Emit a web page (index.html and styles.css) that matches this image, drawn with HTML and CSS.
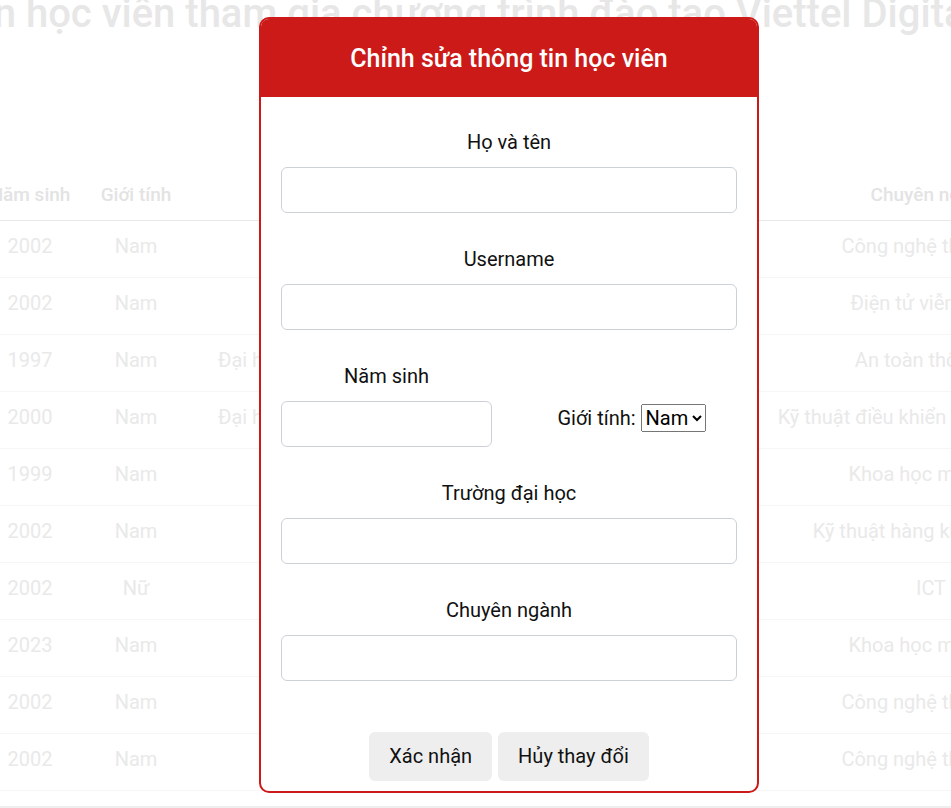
FILE: index.html
```html
<!DOCTYPE html>
<html lang="vi">

<head>
    <meta charset="UTF-8">
    <meta name="viewport" content="width=device-width, initial-scale=1.0">
    <title>Chỉnh sửa thông tin học viên</title>
    <link rel="stylesheet" href="styles.css">
</head>

<body>
    <div class="page">
        <h1 class="page-title">Thông tin học viên tham gia chương trình đào tạo Viettel Digital Talent</h1>
        <table class="student-table">
            <colgroup>
                <col class="col-year">
                <col class="col-gender">
                <col class="col-school">
                <col class="col-major">
            </colgroup>
            <thead>
                <tr>
                    <th>Năm sinh</th>
                    <th>Giới tính</th>
                    <th class="school">Trường đại học</th>
                    <th>Chuyên ngành</th>
                </tr>
            </thead>
            <tbody>
                <tr><td>2002</td><td>Nam</td><td class="school">Đại học Bách khoa</td><td>Công nghệ thông tin</td></tr>
                <tr><td>2002</td><td>Nam</td><td class="school">Học viện Kỹ thuật</td><td>Điện tử viễn thông</td></tr>
                <tr><td>1997</td><td>Nam</td><td class="school">Đại học Công nghệ Thông tin và Truyền thông Thái Nguyên</td><td>An toàn thông tin</td></tr>
                <tr><td>2000</td><td>Nam</td><td class="school">Đại học Công nghệ Thông tin và Truyền thông Thái Nguyên</td><td>Kỹ thuật điều khiển và tự động hóa</td></tr>
                <tr><td>1999</td><td>Nam</td><td class="school">Đại học FPT</td><td>Khoa học máy tính</td></tr>
                <tr><td>2002</td><td>Nam</td><td class="school">Học viện Hàng không</td><td>Kỹ thuật hàng không vũ trụ</td></tr>
                <tr><td>2002</td><td>Nữ</td><td class="school">Đại học Bách khoa</td><td>ICT</td></tr>
                <tr><td>2023</td><td>Nam</td><td class="school">Đại học Quốc gia</td><td>Khoa học máy tính</td></tr>
                <tr><td>2002</td><td>Nam</td><td class="school">Học viện Bưu chính</td><td>Công nghệ thông tin</td></tr>
                <tr><td>2002</td><td>Nam</td><td class="school">Đại học Bách khoa</td><td>Công nghệ thông tin</td></tr>
            </tbody>
        </table>
        <div class="scroll-bar"></div>
    </div>

    <div class="modal">
        <div class="modal-header">
            <h2>Chỉnh sửa thông tin học viên</h2>
        </div>
        <form class="modal-body">
            <div class="form-group">
                <label for="fullname">Họ và tên</label>
                <input type="text" id="fullname">
            </div>
            <div class="form-group">
                <label for="username">Username</label>
                <input type="text" id="username">
            </div>
            <div class="form-row">
                <div class="form-group">
                    <label for="birth-year">Năm sinh</label>
                    <input type="text" id="birth-year">
                </div>
                <div class="gender-group">
                    <label for="gender">Giới tính:</label>
                    <select id="gender">
                        <option>Nam</option>
                        <option>Nữ</option>
                    </select>
                </div>
            </div>
            <div class="form-group">
                <label for="school">Trường đại học</label>
                <input type="text" id="school">
            </div>
            <div class="form-group">
                <label for="major">Chuyên ngành</label>
                <input type="text" id="major">
            </div>
            <div class="modal-actions">
                <button type="button">Xác nhận</button>
                <button type="button">Hủy thay đổi</button>
            </div>
        </form>
    </div>
</body>

</html>
```

FILE: styles.css
```css
body {
    font-family: Roboto, 'Liberation Sans', sans-serif;
    margin: 0;
    height: 808px;
    overflow: hidden;
    background-color: white;
    color: #111;
}

.page {
    width: 951px;
    height: 808px;
    overflow: hidden;
    display: flex;
    flex-direction: column;
}

.page-title {
    margin: -6px 0 0 -154px;
    font-size: 40px;
    line-height: 1;
    font-weight: 500;
    color: #e7e7e7;
    white-space: nowrap;
}

.student-table {
    margin: 136px 0 0 -30px;
    width: 1161px;
    table-layout: fixed;
    border-collapse: collapse;
    flex-shrink: 0;
}

.col-year { width: 120px; }
.col-gender { width: 92px; }
.col-school { width: 549px; }
.col-major { width: 400px; }

.student-table th {
    height: 48px;
    padding: 0 0 2px 0;
    font-size: 19px;
    font-weight: 500;
    color: #e3e3e3;
    border-bottom: 1px solid #e9e9e9;
    white-space: nowrap;
}

.student-table td {
    height: 50px;
    padding: 0 0 6px 0;
    text-align: center;
    font-size: 20px;
    color: #e9e9e9;
    border-bottom: 1px solid #f6f6f6;
    white-space: nowrap;
}

.student-table .school {
    padding-left: 36px;
}

.scroll-bar {
    margin-top: auto;
    height: 2px;
    background-color: #eeeeee;
}

.modal {
    position: absolute;
    top: 17px;
    left: 259px;
    width: 500px;
    box-sizing: border-box;
    border: 2px solid #cc1a18;
    border-radius: 10px;
    background-color: white;
    overflow: hidden;
}

.modal-header {
    height: 78px;
    background-color: #cc1a18;
    color: white;
    display: flex;
    align-items: center;
    justify-content: center;
}

.modal-header h2 {
    margin: 0;
    font-size: 25px;
    font-weight: 500;
}

.modal-body {
    padding: 33px 20px 10px;
    display: flex;
    flex-direction: column;
}

.form-group {
    display: flex;
    flex-direction: column;
    min-width: 0;
    margin-bottom: 34px;
}

.form-group label {
    text-align: center;
    font-size: 20px;
    line-height: 24px;
    margin-bottom: 13px;
}

.form-group input {
    width: 100%;
    min-width: 0;
    height: 46px;
    box-sizing: border-box;
    border: 1px solid #ccd1d8;
    border-radius: 6px;
    padding: 0 12px;
    font-size: 18px;
    font-family: inherit;
    outline: none;
}

.form-row {
    display: grid;
    grid-template-columns: minmax(0, 1fr) minmax(0, 1fr);
    column-gap: 34px;
}

.gender-group {
    display: flex;
    align-items: center;
    justify-content: center;
    gap: 5px;
    padding-top: 25px;
    margin-bottom: 34px;
    font-size: 20px;
}

.gender-group select {
    font-size: 20px;
    font-family: inherit;
}

.modal-actions {
    display: flex;
    justify-content: center;
    gap: 6px;
    margin-top: 17px;
}

.modal-actions button {
    height: 49px;
    padding: 0 20px;
    font-size: 20px;
    line-height: 23px;
    font-family: inherit;
    color: #111;
    background-color: #eeeeee;
    border: none;
    border-radius: 6px;
    cursor: pointer;
}
```
